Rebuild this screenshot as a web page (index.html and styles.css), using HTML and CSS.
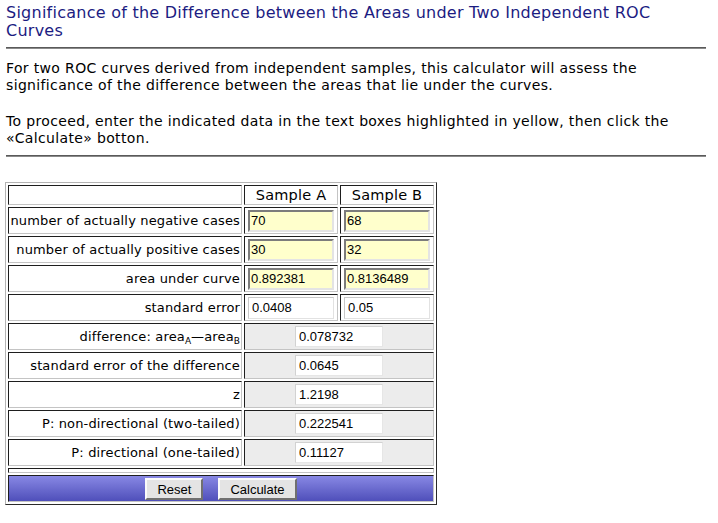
FILE: index.html
```html
<!DOCTYPE html>
<html>
<head>
<meta charset="utf-8">
<title>Significance of the Difference between the Areas under Two Independent ROC Curves</title>
<link rel="stylesheet" href="styles.css">
</head>
<body>
<div class="page">
  <h1 class="title">Significance of the Difference between the Areas under Two Independent ROC<br>Curves</h1>
  <hr class="rule">
  <p class="intro first">For two ROC curves derived from independent samples, this calculator will assess the<br>significance of the difference between the areas that lie under the curves.</p>
  <p class="intro second">To proceed, enter the indicated data in the text boxes highlighted in yellow, then click the<br>«Calculate» botton.</p>
  <hr class="rule rule-bottom">

  <table class="calc">
    <colgroup>
      <col class="c-label">
      <col class="c-sample">
      <col class="c-sample">
    </colgroup>
    <tr class="row-head">
      <td class="lbl"></td>
      <td class="colh">Sample A</td>
      <td class="colh">Sample B</td>
    </tr>
    <tr class="row">
      <td class="lbl">number of actually negative cases</td>
      <td class="val"><input class="in in-yellow" type="text" value="70"></td>
      <td class="val"><input class="in in-yellow" type="text" value="68"></td>
    </tr>
    <tr class="row">
      <td class="lbl">number of actually positive cases</td>
      <td class="val"><input class="in in-yellow" type="text" value="30"></td>
      <td class="val"><input class="in in-yellow" type="text" value="32"></td>
    </tr>
    <tr class="row">
      <td class="lbl">area under curve</td>
      <td class="val"><input class="in in-yellow" type="text" value="0.892381"></td>
      <td class="val"><input class="in in-yellow" type="text" value="0.8136489"></td>
    </tr>
    <tr class="row">
      <td class="lbl">standard error</td>
      <td class="val"><input class="in in-plain" type="text" value="0.0408"></td>
      <td class="val"><input class="in in-plain" type="text" value="0.05"></td>
    </tr>
    <tr class="row">
      <td class="lbl">difference: area<sub>A</sub>—area<sub>B</sub></td>
      <td class="res" colspan="2"><input class="out" type="text" value="0.078732"></td>
    </tr>
    <tr class="row">
      <td class="lbl">standard error of the difference</td>
      <td class="res" colspan="2"><input class="out" type="text" value="0.0645"></td>
    </tr>
    <tr class="row">
      <td class="lbl">z</td>
      <td class="res" colspan="2"><input class="out" type="text" value="1.2198"></td>
    </tr>
    <tr class="row">
      <td class="lbl">P: non-directional (two-tailed)</td>
      <td class="res" colspan="2"><input class="out" type="text" value="0.222541"></td>
    </tr>
    <tr class="row">
      <td class="lbl">P: directional (one-tailed)</td>
      <td class="res" colspan="2"><input class="out" type="text" value="0.11127"></td>
    </tr>
    <tr class="row-thin">
      <td colspan="3"></td>
    </tr>
    <tr class="row-buttons">
      <td colspan="3">
        <div class="btns">
          <button class="btn" type="button">Reset</button>
          <button class="btn" type="button">Calculate</button>
        </div>
      </td>
    </tr>
  </table>
</div>
</body>
</html>
```

FILE: styles.css
```css
html, body {
  margin: 0;
  padding: 0;
  background: #ffffff;
}

body {
  font-family: "DejaVu Sans", Verdana, sans-serif;
  color: #000000;
}

.page {
  width: 700px;
  padding: 4px 0 20px 6px;
}

.title {
  margin: 0;
  font-size: 16px;
  line-height: 18px;
  font-weight: normal;
  color: #1c1c82;
  letter-spacing: 0.25px;
  white-space: nowrap;
}

.rule {
  margin: 7px 0 0 0;
  height: 0;
  border: 0;
  border-top: 1px solid #5a5a5a;
  border-bottom: 1px solid #8a8a8a;
}

.rule-bottom {
  margin-top: 8px;
}

.intro {
  margin: 0;
  font-size: 14px;
  line-height: 17px;
  letter-spacing: 0.35px;
  white-space: nowrap;
}

.intro.first {
  margin-top: 11px;
}

.intro.second {
  margin-top: 19px;
}

/* calculator table */
.calc {
  margin: 25px 0 0 -1px;
  border-collapse: separate;
  border-spacing: 2px;
  table-layout: fixed;
  border: 1px solid;
  border-color: #b4b4b4 #2a2a2a #2a2a2a #b4b4b4;
}

.c-label { width: 234px; }
.c-sample { width: 94px; }

.calc td {
  box-sizing: border-box;
  border: 1px solid;
  border-color: #1e1e1e #c4c4c4 #c4c4c4 #1e1e1e;
  padding: 0;
  vertical-align: middle;
  background: #ffffff;
}

.row-head td {
  height: 20px;
}

.row td {
  height: 27px;
}

.row-thin td {
  height: 5px;
}

.lbl {
  text-align: right;
  font-size: 13px;
  letter-spacing: 0.15px;
  padding-right: 1px !important;
  white-space: nowrap;
}

.lbl sub {
  font-size: 9px;
  vertical-align: -3px;
  line-height: 0;
  letter-spacing: 0;
}

.colh {
  text-align: center;
  font-size: 14.5px;
  letter-spacing: 0.2px;
}

.val {
  padding-left: 3px !important;
}

.res {
  background: #ececec !important;
  text-align: center;
}

.in,
.out {
  box-sizing: border-box;
  display: block;
  font: 13px "Liberation Sans", Arial, sans-serif;
  color: #000000;
  outline: none;
  margin: 0;
}

.in {
  width: 86px;
  height: 22px;
  padding: 0 1px;
}

.in-yellow {
  background: #ffffcc;
  border: 2px solid;
  border-color: #7c7c7c #e4e4e4 #e4e4e4 #7c7c7c;
}

.in-plain {
  background: #ffffff;
  border: 1px solid;
  border-color: #c8c8c8 #e2e2e2 #e2e2e2 #c8c8c8;
  padding: 0 3px;
}

.out {
  width: 88px;
  height: 21px;
  margin: 0 auto;
  padding: 0 3px;
  background: #ffffff;
  border: 1px solid;
  border-color: #d2d2d2 #e6e6e6 #e6e6e6 #d2d2d2;
}

.row-buttons td {
  height: 27px;
  background: linear-gradient(to bottom, #8888e4, #4f4fba);
}

.btns {
  display: flex;
  justify-content: center;
  gap: 15px;
  padding-top: 1px;
}

.btn {
  box-sizing: border-box;
  height: 22px;
  padding: 0 10px;
  font: 13px "Liberation Sans", Arial, sans-serif;
  color: #000000;
  background: #e4e4e4;
  border: 2px solid;
  border-color: #fafafa #707070 #707070 #fafafa;
  border-radius: 0;
}
```
